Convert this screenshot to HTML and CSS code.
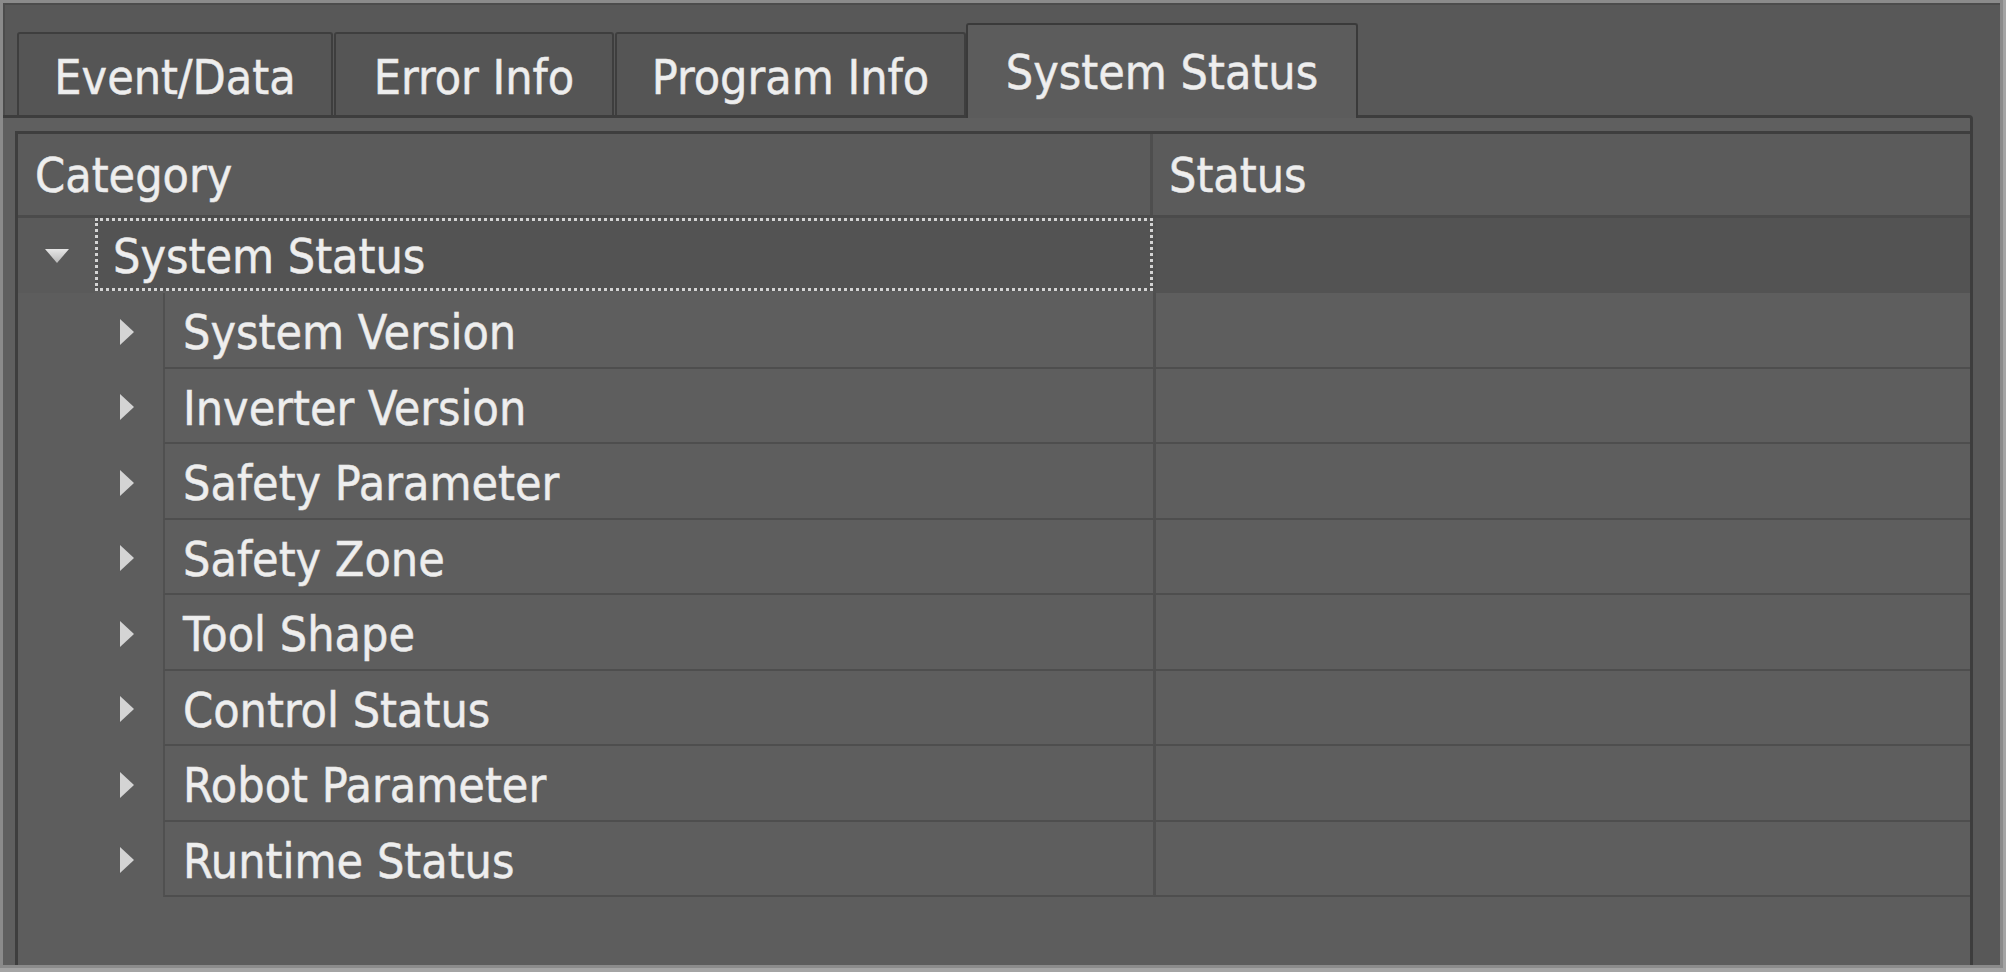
FILE: index.html
```html
<!DOCTYPE html>
<html>
<head>
<meta charset="utf-8">
<link rel="stylesheet" href="styles.css">
</head>
<body>
<div class="window">
  <div class="tabbar">
    <div class="tab tab-event">Event/Data</div>
    <div class="tab tab-error">Error Info</div>
    <div class="tab tab-program">Program Info</div>
    <div class="tab tab-system active">System Status</div>
  </div>
  <div class="pane">
    <div class="tree">
      <div class="header">
        <div class="hcell hcat">Category</div>
        <div class="hcell hstatus">Status</div>
      </div>
      <div class="row root">
        <div class="indent indent-root">
          <svg class="arrow-down" width="26" height="16" viewBox="0 0 26 16"><defs><linearGradient id="gd" x1="0" y1="0" x2="0" y2="1"><stop offset="0" stop-color="#e6e6e6"/><stop offset="1" stop-color="#b8b8b8"/></linearGradient></defs><polygon points="1,1 25,1 13,15" fill="url(#gd)"/></svg>
        </div>
        <div class="name focus">System Status</div>
        <div class="status sel"></div>
      </div>
      <div class="row child">
        <div class="indent indent-child"><svg class="arrow-right" width="16" height="28" viewBox="0 0 16 28"><polygon points="1,1 15,14 1,27" fill="#d4d4d4"/></svg></div>
        <div class="name">System Version</div>
        <div class="status"></div>
      </div>
      <div class="row child">
        <div class="indent indent-child"><svg class="arrow-right" width="16" height="28" viewBox="0 0 16 28"><polygon points="1,1 15,14 1,27" fill="#d4d4d4"/></svg></div>
        <div class="name">Inverter Version</div>
        <div class="status"></div>
      </div>
      <div class="row child">
        <div class="indent indent-child"><svg class="arrow-right" width="16" height="28" viewBox="0 0 16 28"><polygon points="1,1 15,14 1,27" fill="#d4d4d4"/></svg></div>
        <div class="name">Safety Parameter</div>
        <div class="status"></div>
      </div>
      <div class="row child">
        <div class="indent indent-child"><svg class="arrow-right" width="16" height="28" viewBox="0 0 16 28"><polygon points="1,1 15,14 1,27" fill="#d4d4d4"/></svg></div>
        <div class="name">Safety Zone</div>
        <div class="status"></div>
      </div>
      <div class="row child">
        <div class="indent indent-child"><svg class="arrow-right" width="16" height="28" viewBox="0 0 16 28"><polygon points="1,1 15,14 1,27" fill="#d4d4d4"/></svg></div>
        <div class="name">Tool Shape</div>
        <div class="status"></div>
      </div>
      <div class="row child">
        <div class="indent indent-child"><svg class="arrow-right" width="16" height="28" viewBox="0 0 16 28"><polygon points="1,1 15,14 1,27" fill="#d4d4d4"/></svg></div>
        <div class="name">Control Status</div>
        <div class="status"></div>
      </div>
      <div class="row child">
        <div class="indent indent-child"><svg class="arrow-right" width="16" height="28" viewBox="0 0 16 28"><polygon points="1,1 15,14 1,27" fill="#d4d4d4"/></svg></div>
        <div class="name">Robot Parameter</div>
        <div class="status"></div>
      </div>
      <div class="row child">
        <div class="indent indent-child"><svg class="arrow-right" width="16" height="28" viewBox="0 0 16 28"><polygon points="1,1 15,14 1,27" fill="#d4d4d4"/></svg></div>
        <div class="name">Runtime Status</div>
        <div class="status"></div>
      </div>
    </div>
  </div>
</div>
</body>
</html>
```
FILE: styles.css
```css
* { box-sizing: border-box; }
html, body { margin: 0; padding: 0; }
body {
  background: #a4a4a4;
  width: 2006px;
  height: 972px;
  overflow: hidden;
  font-family: "DejaVu Sans Condensed", "Liberation Sans", sans-serif;
  font-size: 48px;
  color: #eeeeee;
  -webkit-text-stroke: 0.5px #e8e8e8;
}
.window {
  width: 2003px;
  height: 968px;
  border: 3px solid #8b8b8b;
  background: #585858;
  box-shadow: inset 2px 2px 0 #4c4c4c;
  display: flex;
  flex-direction: column;
}
.tabbar {
  margin-top: 20px;
  height: 92px;
  padding-left: 14px;
  display: flex;
  align-items: flex-end;
  flex-shrink: 0;
}
.tab {
  height: 83px;
  background: #555555;
  border: 2px solid #3e3e3e;
  border-bottom: none;
  border-radius: 3px 3px 0 0;
  display: flex;
  align-items: center;
  justify-content: center;
  margin-right: 1px;
  line-height: 1;
  padding-top: 5px;
}
.tab-event { width: 316px; }
.tab-error { width: 280px; }
.tab-program { width: 351px; }
.tab-system { width: 392px; margin-left: -1px; }
.tab.active {
  height: 95px;
  margin-bottom: -3px;
  background: #5c5c5c;
  position: relative;
  z-index: 1;
  border-color: #3a3a3a;
  padding-top: 1px;
}
.pane {
  width: 1970px;
  flex: 1;
  background: #5f5f5f;
  border-top: 3px solid #3d3d3d;
  border-right: 3px solid #3d3d3d;
  border-radius: 0 4px 0 0;
  padding: 13px 0 0 12px;
  display: flex;
}
.tree {
  flex: 1;
  background: #5d5d5d;
  border-top: 3px solid #3e3e3e;
  border-left: 3px solid #3e3e3e;
  display: flex;
  flex-direction: column;
}
.header {
  display: flex;
  height: 84px;
  background: #5b5b5b;
  border-bottom: 3px solid #4b4b4b;
  flex-shrink: 0;
}
.hcell {
  display: flex;
  align-items: center;
  line-height: 1;
  padding-top: 1px;
}
.hcat {
  width: 1135px;
  padding-left: 17px;
  border-right: 3px solid #4e4e4e;
}
.hstatus {
  flex: 1;
  padding-left: 16px;
}
.row {
  display: flex;
  flex-shrink: 0;
}
.root { height: 75px; }
.child { height: 75.5px; }
.indent {
  display: flex;
  align-items: center;
}
.indent-root {
  width: 77px;
  background: #5a5a5a;
  justify-content: center;
  padding-left: 1px;
}
.indent-child {
  width: 145px;
  padding-left: 101px;
  padding-top: 2px;
}
.name {
  flex: 1;
  display: flex;
  align-items: center;
  line-height: 1;
  background: #5e5e5e;
}
.child .name {
  border-left: 2px solid #505050;
  border-bottom: 2px solid #4e4e4e;
  padding-left: 18px;
  padding-top: 5px;
}
.root .name.focus {
  background: #535353;
  border: 3px dotted #d4d4d4;
  padding-left: 15px;
  padding-top: 3px;
  height: 73px;
}
.status {
  width: 817px;
  background: #5e5e5e;
  border-left: 3px solid #4f4f4f;
}
.child .status {
  border-bottom: 2px solid #4e4e4e;
}
.status.sel {
  background: #535353;
  border-left-color: #505050;
}
```
